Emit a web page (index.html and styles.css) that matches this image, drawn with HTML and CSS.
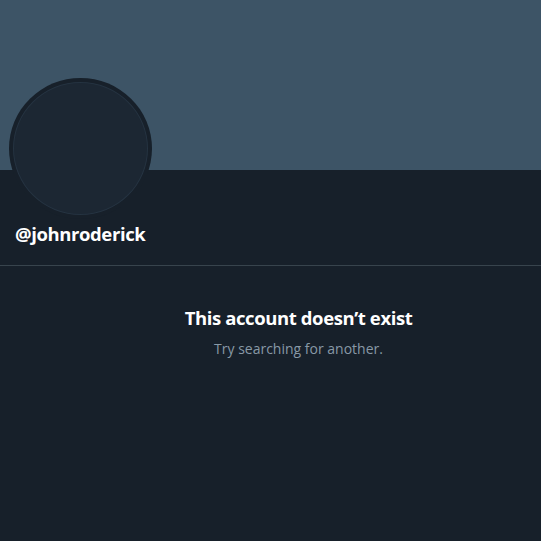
FILE: index.html
```html
<!DOCTYPE html>
<html lang="en">

<head>
    <meta charset="UTF-8">
    <meta name="viewport" content="width=device-width, initial-scale=1.0">
    <title>Profile</title>
    <link rel="stylesheet" href="styles.css">
</head>

<body>
    <div class="profile">
        <div class="banner"></div>
        <div class="head">
            <div class="avatar"><div class="avatar_inner"></div></div>
            <div class="handle">@johnroderick</div>
        </div>
    </div>

    <div class="empty">
        <div class="empty_title">This account doesn’t exist</div>
        <div class="empty_sub">Try searching for another.</div>
    </div>
</body>

</html>
```

FILE: styles.css
```css
* {
    margin: 0px;
    padding: 0px;
    box-sizing: border-box;
}

body {
    background-color: #17202a;
    font-family: "Open Sans", "Liberation Sans", sans-serif;
    color: #fff;
    width: 541px;
    height: 541px;
    overflow: hidden;
}

/* -------------------------头部------------------------- */
.banner {
    height: 170px;
    background-color: #3d5466;
}

.head {
    display: flex;
    flex-direction: column;
    padding: 0px 15px;
    height: 96px;
    border-bottom: 1px solid #38444d;
}

.avatar {
    width: 143px;
    height: 141px;
    margin: -92px 0px 0px -6px;
    border-radius: 50%;
    background-color: #17202a;
    padding: 4px;
}

.avatar_inner {
    width: 100%;
    height: 100%;
    border-radius: 50%;
    background-color: #1c2733;
    border: 1px solid #253341;
}

.handle {
    font-size: 18.5px;
    font-weight: bold;
    line-height: 24px;
    margin-top: 3px;
    letter-spacing: -0.4px;
}

/* -------------------------提示------------------------- */
.empty {
    padding: 39px 0px 0px 56px;
    text-align: center;
}

.empty_title {
    font-size: 18.5px;
    font-weight: bold;
    line-height: 26px;
    letter-spacing: -0.4px;
}

.empty_sub {
    margin-top: 8px;
    font-size: 14px;
    line-height: 20px;
    color: #8899a6;
}
```
